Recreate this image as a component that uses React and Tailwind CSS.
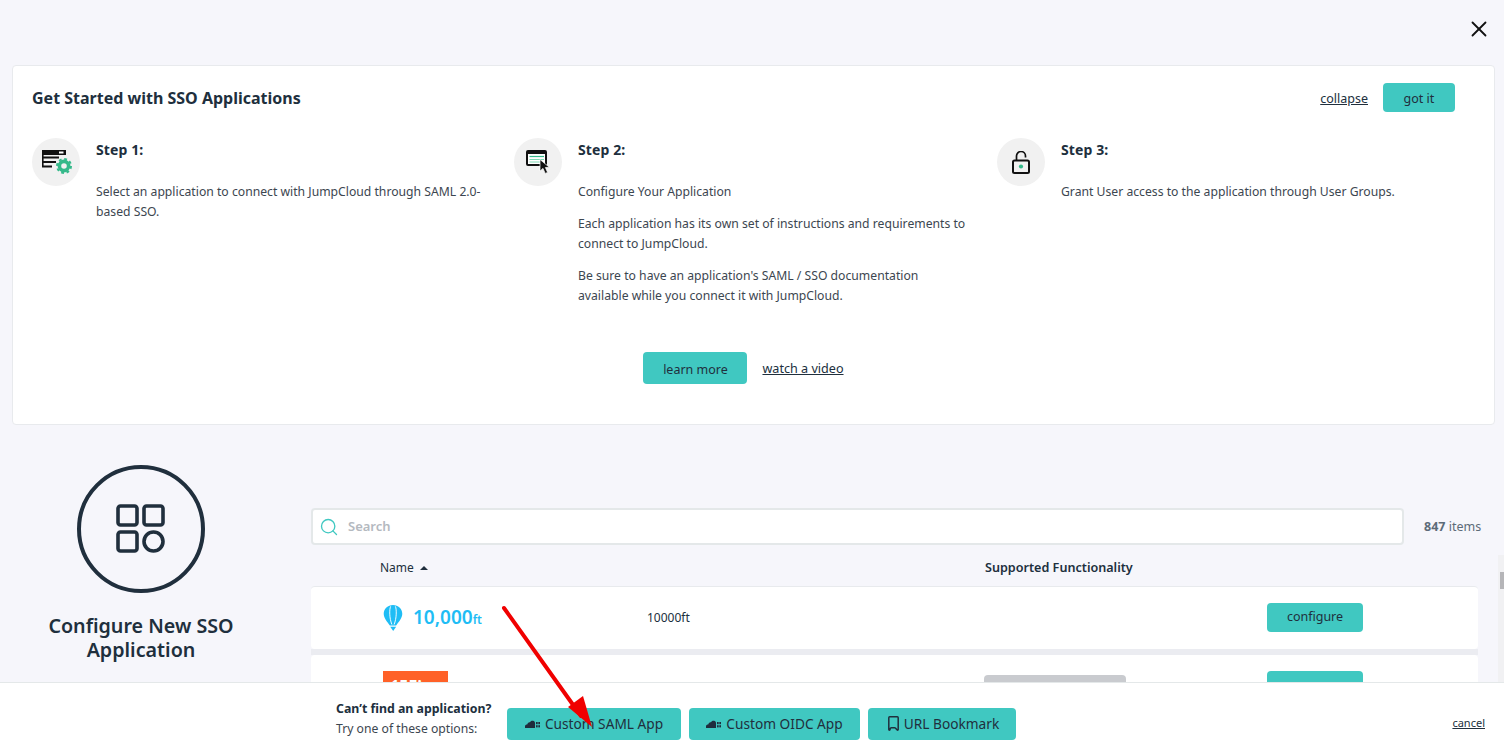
import React from "react";
import { X, Search } from "lucide-react";

const CloudIcon = () => (
  <svg width="15" height="8" viewBox="0 0 15 8" className="shrink-0" fill="#1f2d3d">
    <path d="M0 8V6C0 5 1 4.4 2.2 4.4 2.6 2.8 3.8 2.2 5 2.2 5.8 1 7 .6 8 .8 9.2 1 10 1.8 10 3v5H0Z" />
    <rect x="11" y="2" width="1.7" height="2.2" />
    <rect x="13.3" y="2" width="1.7" height="2.2" />
    <rect x="11" y="5.2" width="1.7" height="2.2" />
    <rect x="13.3" y="5.2" width="1.7" height="2.2" />
  </svg>
);

const BookmarkIcon = () => (
  <svg width="11" height="15" viewBox="0 0 11 15" fill="none" stroke="#202f3d" strokeWidth="1.5" className="shrink-0 ml-[3px]">
    <path d="M1.7.8h7.6c.5 0 .9.4.9.9v11.8c0 .6-.6.9-1 .5L7.6 12.2c-.3-.3-.6-.4-1-.4H3.4c-.4 0-.7.1-1 .4L1.8 14c-.4.4-1 .1-1-.5V1.7c0-.5.4-.9.9-.9Z" />
  </svg>
);

const IconCircle = ({ children }) => (
  <div className="w-12 h-12 rounded-full bg-[#f1f1f1] flex items-center justify-center shrink-0">{children}</div>
);

const Step1Icon = () => (
  <svg width="30" height="24" viewBox="0 0 30 24" className="ml-[2px]">
    <rect x="0" y="0" width="24" height="5" fill="#111" />
    <rect x="17" y="1.5" width="4.5" height="2" fill="#fff" />
    <path d="M.8 5v12" stroke="#111" strokeWidth="1.6" />
    <path d="M0 7.5h17M0 12h14M0 16.5h10" stroke="#111" strokeWidth="1.8" fill="none" />
    <circle cx="22" cy="16" r="4.6" fill="none" stroke="#35b98a" strokeWidth="3.6" />
    <circle cx="22" cy="16" r="7" fill="none" stroke="#35b98a" strokeWidth="2" strokeDasharray="2.8 2.7" />
  </svg>
);

const Step2Icon = () => (
  <svg width="25" height="24" viewBox="0 0 25 24">
    <rect x="1" y="1" width="19" height="14" rx="1" fill="#fff" stroke="#111" strokeWidth="2" />
    <path d="M1 3h19" stroke="#111" strokeWidth="2" />
    <path d="M3.5 6.5H18" stroke="#35b98a" strokeWidth="1.2" />
    <path d="M3.5 9.5H18M3.5 12H14" stroke="#7fd8b4" strokeWidth="1" />
    <path d="M14 9.5v11.5l3-2.6 2.2 5 2.4-1-2.2-4.9 4-.2Z" fill="#111" stroke="#fff" strokeWidth=".7" />
  </svg>
);

const Step3Icon = () => (
  <svg width="18" height="23" viewBox="0 0 18 23">
    <path d="M4.5 9V5a4.5 4.5 0 0 1 9 0v1.5" fill="none" stroke="#111" strokeWidth="1.7" />
    <rect x="1" y="9.5" width="16" height="12.5" rx="1.5" fill="none" stroke="#111" strokeWidth="2" />
    <circle cx="9" cy="15.5" r="2.1" fill="#35b98a" />
  </svg>
);

const AppsIcon = () => (
  <svg width="50" height="50" viewBox="0 0 50 50" fill="none" stroke="#202f3d" strokeWidth="3.6">
    <rect x="2" y="2" width="19" height="19" rx="2.5" />
    <rect x="28" y="2" width="19" height="19" rx="2.5" />
    <rect x="2" y="28" width="19" height="19" rx="2.5" />
    <circle cx="37.5" cy="37.5" r="9.5" />
  </svg>
);

const Balloon = () => (
  <svg width="20" height="26" viewBox="0 0 20 28" fill="#1fbdf5">
    <path d="M10 0C4.5 0 0 4 0 9.5c0 4.5 3.6 8.5 6.6 12.5h6.8C16.4 18 20 14 20 9.5 20 4 15.5 0 10 0Z" />
    <path d="M7 23.5h6.4L10.2 28Z" />
    <path d="M7.4 1.5C6 5 6 14 8.8 21M12.6 1.5C14 5 14 14 11.2 21" stroke="#fff" strokeWidth="1" fill="none" />
  </svg>
);

const Step = ({ icon, title, children, className }) => (
  <div className={`flex gap-4 ${className}`}>
    <IconCircle>{icon}</IconCircle>
    <div className="flex-1">
      <div className="text-sm font-bold leading-6 text-[#202f3d] tracking-[0.1px] h-[24px]">{title}</div>
      <div className="mt-5 text-[12.2px] leading-5 text-[#3c4650] flex flex-col gap-3">{children}</div>
    </div>
  </div>
);

const FootButton = ({ icon, label, className }) => (
  <button className={`h-8 rounded bg-[#40c8c1] flex items-center justify-center gap-[5px] text-[13.7px] text-[#202f3d] ${className}`}>
    {icon}
    <span className="pt-[2px]">{label}</span>
  </button>
);

export default function App() {
  return (
    <div className="relative w-[1504px] h-[750px] overflow-hidden bg-[#f6f6fb] font-['Noto_Sans',sans-serif] text-[#202f3d]">
      <div className="h-[65px] flex justify-end items-start pt-4 pr-3">
        <X size={26} strokeWidth={1.7} className="text-[#111]" />
      </div>

      <section className="ml-3 w-[1483px] h-[360px] bg-white border border-[#e8eaed] pt-[17px] pl-[19px] pr-[39px] rounded-sm">
        <div className="flex items-center justify-between h-[29px]">
          <h2 className="text-base font-bold">Get Started with SSO Applications</h2>
          <div className="flex items-center gap-[15px]">
            <a className="text-[12.5px] underline mt-[3px]">collapse</a>
            <button className="w-[72px] h-[29px] rounded-sm bg-[#40c8c1] text-[12.5px] pt-[3px]">got it</button>
          </div>
        </div>

        <div className="flex mt-[26px]">
          <Step className="w-[482px]" icon={<Step1Icon />} title="Step 1:">
            <p className="w-[400px]">Select an application to connect with JumpCloud through SAML 2.0-based SSO.</p>
          </Step>
          <Step className="w-[483px] pr-[12px]" icon={<Step2Icon />} title="Step 2:">
            <p>Configure Your Application</p>
            <p className="w-[395px]">Each application has its own set of instructions and requirements to connect to JumpCloud.</p>
            <p className="w-[370px]">Be sure to have an application's SAML / SSO documentation available while you connect it with JumpCloud.</p>
          </Step>
          <Step className="flex-1" icon={<Step3Icon />} title="Step 3:">
            <p>Grant User access to the application through User Groups.</p>
          </Step>
        </div>

        <div className="flex justify-center items-center gap-[15px] mt-[46px]">
          <button className="w-[104px] h-8 rounded-sm bg-[#40c8c1] text-[12.5px] pt-[4px]">learn more</button>
          <a className="text-[12.6px] underline mt-[2px]">watch a video</a>
        </div>
      </section>

      <div className="flex mt-10 pl-3">
        <aside className="w-[258px] flex flex-col items-center shrink-0">
          <div className="w-32 h-32 rounded-full border-4 border-[#202f3d] flex items-center justify-center">
            <AppsIcon />
          </div>
          <h1 className="mt-[21px] text-[19.7px] font-semibold leading-6 text-center w-[230px]">Configure New SSO Application</h1>
        </aside>

        <main className="ml-[41px] w-[1167px] pt-[43px]">
          <div className="flex items-center">
            <div className="w-[1093px] shrink-0 h-[37px] bg-white border-2 border-[#e4e8e9] flex items-center pl-[6px] gap-[9px] rounded-sm">
              <Search size={20} strokeWidth={1.6} className="text-[#40c8c1]" />
              <span className="text-[13px] font-semibold text-[#b4b9bf]">Search</span>
            </div>
            <div className="ml-[20px] mt-[1px] text-[12.5px] text-[#5c6b78] whitespace-nowrap"><b>847</b> items</div>
          </div>

          <div className="flex items-center h-[41px] pt-[5px] pl-[69px] text-xs">
            <span className="flex items-center gap-[6px] w-[605px]">
              Name
              <span className="w-0 h-0 border-x-[4px] border-x-transparent border-b-[4px] border-b-[#202f3d]"></span>
            </span>
            <span className="font-semibold text-[12.6px]">Supported Functionality</span>
          </div>

          <div className="w-[1167px] h-[63px] bg-white border-t border-t-[#e8eaed] flex items-center rounded-sm">
            <div className="w-[336px] pl-[72px] flex items-center gap-[10px]">
              <Balloon />
              <span className="text-[19px] font-semibold text-[#1fbdf5] leading-none whitespace-nowrap -mt-[2px]">10,000<span className="text-[12px]">ft</span></span>
            </div>
            <span className="text-xs w-[620px]">10000ft</span>
            <button className="w-24 h-[29px] -mt-[2px] rounded-sm bg-[#40c8c1] text-[12.5px] pt-[1px]">configure</button>
          </div>
          <div className="h-[6px] bg-[#ebecf1] w-[1167px]"></div>
          <div className="w-[1167px] h-[60px] bg-white flex items-start rounded-sm pt-4">
            <div className="w-[336px] pl-[72px]">
              <div className="w-[65px] h-8 bg-[#ff6128] text-center text-white text-base font-bold leading-none pt-[7px]">15Five</div>
            </div>
            <div className="w-[337px] text-xs mt-[9px]">15Five</div>
            <div className="w-[142px] h-6 mt-1 rounded bg-[#c9cbcf]"></div>
            <div className="w-[141px]"></div>
            <div className="w-24 h-8 rounded-sm bg-[#40c8c1]"></div>
          </div>
        </main>
      </div>

      {/* page scrollbar fragment */}
      <div className="absolute left-[1498px] top-[555px] w-[6px] h-[127px] bg-[#f1f1f3]">
        <div className="mt-[17px] ml-[2px] h-[17px] bg-[#b5b5b8]"></div>
      </div>

      {/* footer bar */}
      <footer className="absolute left-0 right-0 bottom-0 h-[68px] bg-white border-t border-[#e4e8e9] flex items-center pl-[336px] pr-[19px]">
        <div className="w-[171px] text-[12.2px] leading-5 mt-1">
          <div className="font-bold text-[12.35px]">Can’t find an application?</div>
          <div className="text-[#3c4650]">Try one of these options:</div>
        </div>
        <div className="flex gap-2 mt-[14px]">
          <FootButton className="w-[174px]" icon={<CloudIcon />} label="Custom SAML App" />
          <FootButton className="w-[171px]" icon={<CloudIcon />} label="Custom OIDC App" />
          <FootButton className="w-[148px]" icon={<BookmarkIcon />} label="URL Bookmark" />
        </div>
        <a className="ml-auto text-[11px] underline mt-[14px]">cancel</a>
      </footer>

      {/* red annotation arrow */}
      <svg className="absolute left-[495px] top-[600px] pointer-events-none" width="110" height="135" viewBox="0 0 110 135">
        <path d="M9 8 L86 116" stroke="#f00000" strokeWidth="4" strokeLinecap="round" />
        <path d="M97 127 L73 107 L88 96 Z" fill="#f00000" />
      </svg>
    </div>
  );
}
